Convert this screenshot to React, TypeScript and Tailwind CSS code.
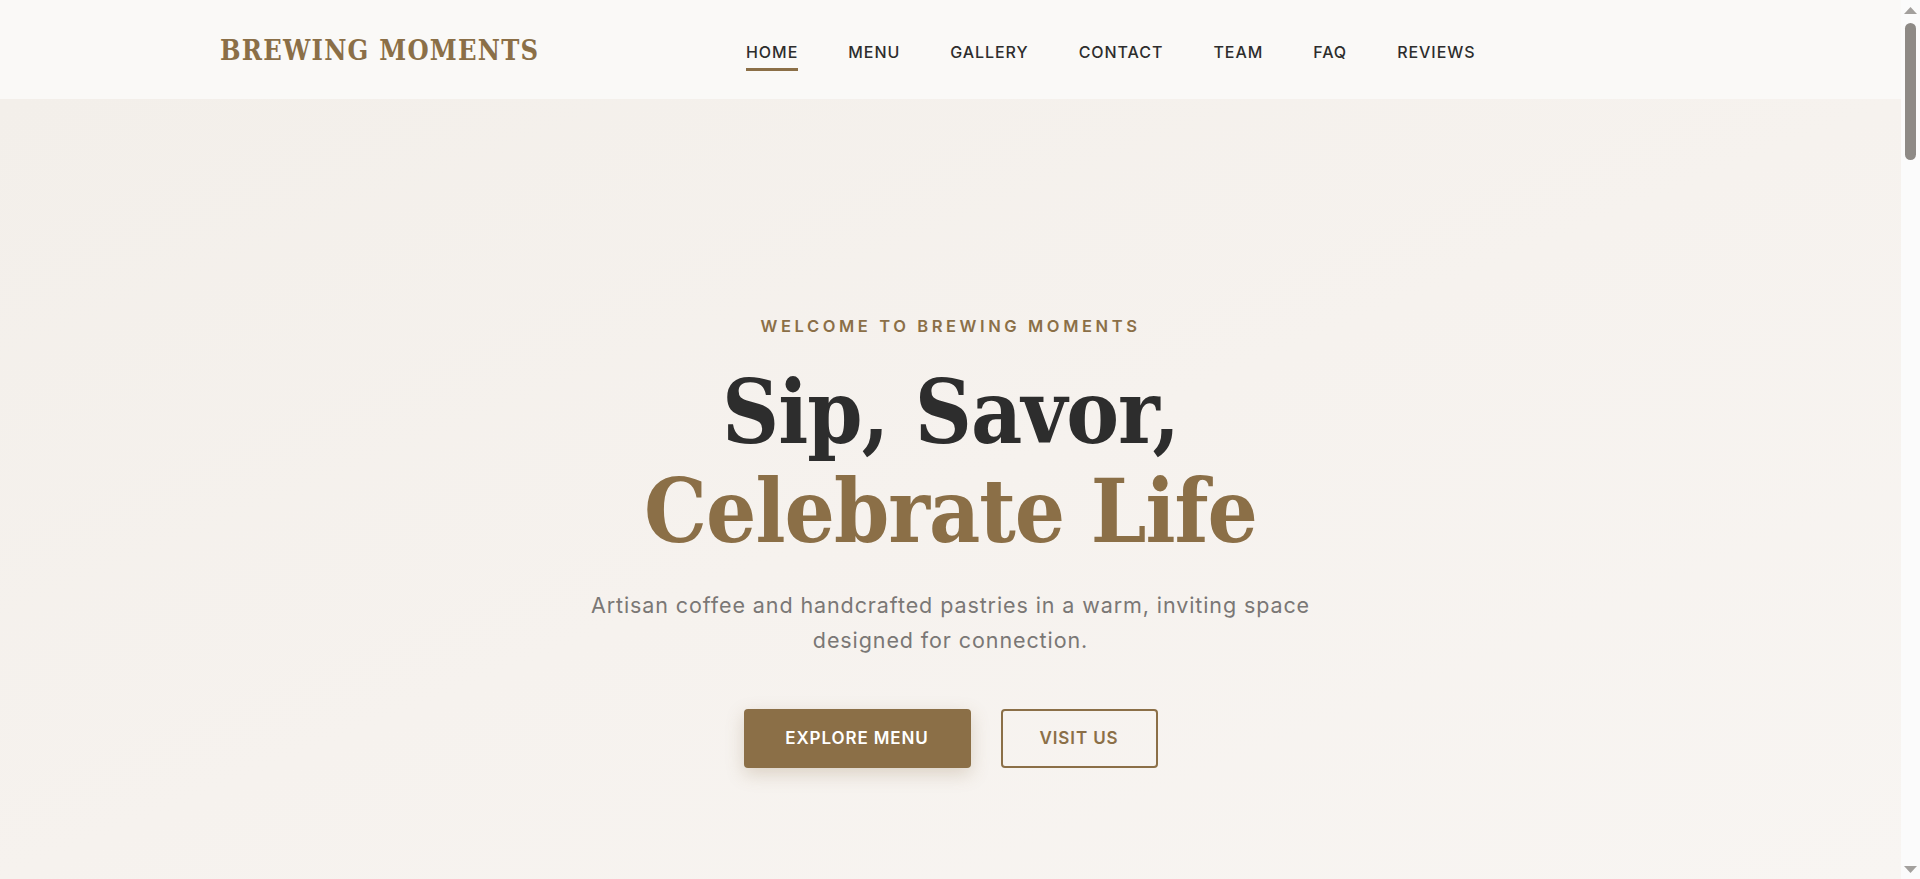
import { useState } from 'react'

const NAV = ['Home', 'Menu', 'Gallery', 'Contact', 'Team', 'FAQ', 'Reviews']

const serif = { fontFamily: '"DejaVu Serif Condensed", "DejaVu Serif", "Liberation Serif", serif' }

function Header() {
  const [active, setActive] = useState('Home')
  return (
    <header className="bg-[#faf9f7] h-[99px] flex items-center pl-[220px]">
      <div className="w-[526px] pt-[4px]">
        <a href="#" className="text-[27px] font-bold text-[#8b6f47] tracking-[1.25px] leading-none" style={serif}>
          BREWING MOMENTS
        </a>
      </div>
      <nav className="flex items-center gap-[50px] pt-[4px]">
        {NAV.map((item) => (
          <a
            key={item}
            href="#"
            onClick={() => setActive(item)}
            className="relative text-[16px] font-medium uppercase tracking-[0.95px] text-[#2d2d2d] leading-[24px]"
          >
            {item}
            {active === item && <span className="absolute left-0 right-0 top-[28px] h-[3px] bg-[#8b6f47]" />}
          </a>
        ))}
      </nav>
    </header>
  )
}

function Hero() {
  return (
    <section className="h-[780px] flex flex-col items-center text-center pt-[215px] bg-gradient-to-br from-[#f3efea] via-[#f6f2ee] to-[#f8f5f2]">
      <p className="text-[16.5px] font-semibold uppercase tracking-[3.6px] text-[#8b6f47] leading-[24px]">
        Welcome to Brewing Moments
      </p>
      <h1 className="mt-[25px] text-[88px] font-bold tracking-[-1px] leading-[99px] text-[#2d2d2d]" style={serif}>
        Sip, Savor,
        <br />
        <span className="text-[#8b6f47]">Celebrate Life</span>
      </h1>
      <p className="mt-[27px] max-w-[745px] text-[21.5px] tracking-[0.9px] leading-[35px] text-[#7a7775]">
        Artisan coffee and handcrafted pastries in a warm, inviting space designed for connection.
      </p>
      <div className="mt-[51px] flex items-center gap-[30px]">
        <a
          href="#menu"
          className="h-[59px] w-[227px] flex items-center justify-center rounded-[4px] bg-[#8b6f47] text-white text-[17px] font-semibold uppercase tracking-[0.9px] shadow-[0_6px_18px_rgba(139,111,71,0.25)]"
        >
          Explore Menu
        </a>
        <a
          href="#contact"
          className="h-[59px] w-[157px] flex items-center justify-center rounded-[4px] border-2 border-[#8b6f47] text-[#8b6f47] text-[17px] font-semibold uppercase tracking-[0.9px]"
        >
          Visit Us
        </a>
      </div>
    </section>
  )
}

function Scrollbar() {
  return (
    <div className="w-[19px] h-[879px] bg-[#fbfbfb] flex flex-col items-center">
      <svg width="13" height="7" viewBox="0 0 13 7" className="mt-[7px]">
        <path d="M6.5 0 L13 7 L0 7 Z" fill="#a3a09d" />
      </svg>
      <div className="mt-[9px] w-[11px] h-[137px] rounded-full bg-[#8e8a86]" />
      <div className="flex-1" />
      <svg width="13" height="7" viewBox="0 0 13 7" className="mb-[6px]">
        <path d="M0 0 L13 0 L6.5 7 Z" fill="#a3a09d" />
      </svg>
    </div>
  )
}

export default function App() {
  return (
    <div className="h-[879px] flex overflow-hidden bg-[#faf9f7]" style={{ fontFamily: 'Inter, "Open Sans", sans-serif' }}>
      <main className="flex-1 min-w-0">
        <Header />
        <Hero />
      </main>
      <Scrollbar />
    </div>
  )
}
